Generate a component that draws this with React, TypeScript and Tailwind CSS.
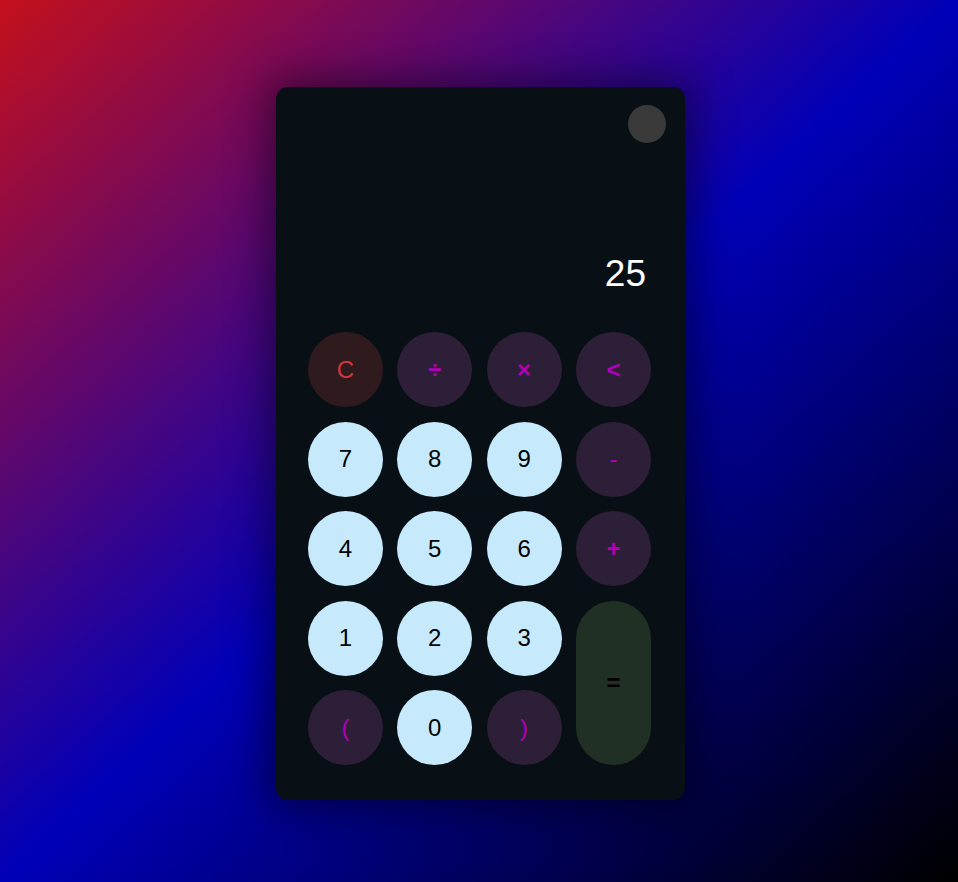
import React from "react";

type Btn = { label: string; kind: "clear" | "op" | "num"; bold?: boolean };

const rows: Btn[] = [
  { label: "C", kind: "clear" },
  { label: "÷", kind: "op", bold: true },
  { label: "×", kind: "op", bold: true },
  { label: "<", kind: "op", bold: true },
  { label: "7", kind: "num" },
  { label: "8", kind: "num" },
  { label: "9", kind: "num" },
  { label: "-", kind: "op" },
  { label: "4", kind: "num" },
  { label: "5", kind: "num" },
  { label: "6", kind: "num" },
  { label: "+", kind: "op", bold: true },
  { label: "1", kind: "num" },
  { label: "2", kind: "num" },
  { label: "3", kind: "num" },
];

function Key({ b }: { b: Btn }) {
  const cls =
    b.kind === "clear"
      ? "bg-[#2f1a1e] text-[#d0353f]"
      : b.kind === "op"
      ? "bg-[#2e1f38] text-[#b000b8]"
      : "bg-[#c6eafc] text-black";
  return (
    <button
      className={`w-[75px] h-[75px] rounded-full flex items-center justify-center text-[24px] leading-none ${cls} ${
        b.bold ? "font-semibold" : ""
      }`}
    >
      {b.label}
    </button>
  );
}

export default function App() {
  return (
    <div
      className="w-full h-[882px] flex items-start justify-start bg-[linear-gradient(to_bottom_right,#c4101c,#0000b8,#000000)]"
      style={{ fontFamily: '"Liberation Sans", Arial, sans-serif' }}
    >
      <div className="mt-[87px] ml-[276px] w-[409px] h-[713px] rounded-[12px] bg-[#091015] shadow-[0_0_40px_10px_rgba(0,0,0,0.45)] flex flex-col pl-[32px] pr-[34px]">
        <div className="flex justify-end pt-[18px] -mr-[15px]">
          <div className="w-[38px] h-[38px] rounded-full bg-[#3a3a3a]" />
        </div>
        <div className="flex justify-end pr-[5px] mt-[109px] h-[40px] items-end">
          <span className="text-white text-[37px] leading-none">25</span>
        </div>
        <div className="mt-[40px] grid grid-cols-[repeat(4,75px)] gap-x-[14.3px] gap-y-[14.5px]">
          {rows.map((b, i) => (
            <Key key={i} b={b} />
          ))}
          <button className="row-start-4 col-start-4 row-span-2 w-[75px] rounded-full bg-[#213025] text-black text-[24px] font-semibold flex items-center justify-center">
            =
          </button>
          <Key b={{ label: "(", kind: "op" }} />
          <Key b={{ label: "0", kind: "num" }} />
          <Key b={{ label: ")", kind: "op" }} />
        </div>
      </div>
    </div>
  );
}
